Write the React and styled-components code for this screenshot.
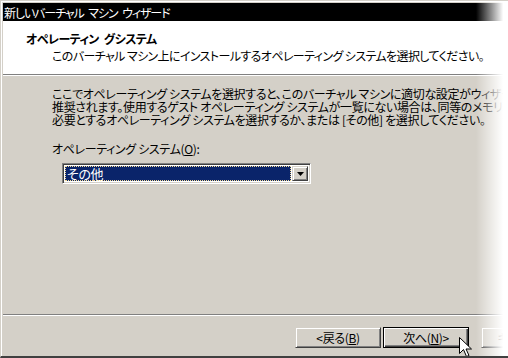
import styled, { createGlobalStyle } from 'styled-components'

const GlobalStyle = createGlobalStyle`
  html, body {
    margin: 0;
    padding: 0;
    background: #ffffff;
  }
  body {
    font-family: "Noto Sans CJK JP", "Noto Sans", sans-serif;
    font-size: 12px;
    line-height: 13px;
    font-feature-settings: "palt";
    letter-spacing: -0.35px;
  }
`

const Window = styled.div`
  position: relative;
  width: 508px;
  height: 358px;
  overflow: hidden;
  box-sizing: border-box;
  background: #d4d0c8;
  border-top: 1px solid #d4d0c8;
  border-left: 1px solid #d4d0c8;
  border-bottom: 2px solid #404040;
  box-shadow: inset 1px 1px 0 #ffffff;
  padding: 2px 0 0 2px;
  display: flex;
  flex-direction: column;
`

const TitleBar = styled.div`
  height: 18px;
  background: #000000;
  color: #ffffff;
  padding-left: 1px;
  display: flex;
  align-items: center;
  white-space: nowrap;
  letter-spacing: -1.1px;
  word-spacing: 3px;
`

const Header = styled.div`
  height: 54px;
  box-sizing: border-box;
  background: #ffffff;
  border-bottom: 1px solid #808080;
  padding: 11px 0 0 23px;
  display: flex;
  flex-direction: column;
  gap: 4px;
  white-space: nowrap;
`

const HeaderTitle = styled.div`
  font-weight: bold;
  letter-spacing: -0.6px;
  word-spacing: 3px;
`

const HeaderSub = styled.div`
  padding-left: 26px;
  letter-spacing: -0.6px;
`

const Body = styled.div`
  flex: 1;
  border-top: 1px solid #ffffff;
  display: flex;
  flex-direction: column;
  padding: 11px 0 0 49px;
`

const Line = styled.div`
  white-space: nowrap;
`

const Label = styled.div`
  margin-top: 16px;
  white-space: nowrap;
`

const Key = styled.span`
  text-decoration: underline;
`

const Combo = styled.div`
  margin: 8px 0 0 10px;
  width: 249px;
  height: 21px;
  box-sizing: border-box;
  background: #ffffff;
  border-top: 1px solid #808080;
  border-left: 1px solid #808080;
  border-right: 1px solid #ffffff;
  border-bottom: 1px solid #ffffff;
  box-shadow: inset 1px 1px 0 #404040, inset -1px -1px 0 #d4d0c8;
  padding: 2px;
  display: flex;
  gap: 1px;
`

const Selected = styled.div`
  flex: 1;
  background: #0a246a;
  color: #ffffff;
  outline: 1px dotted #f5db95;
  outline-offset: -1px;
  padding-left: 2px;
  display: flex;
  align-items: center;
  font-size: 13px;
`

const DropButton = styled.div`
  width: 16px;
  box-sizing: border-box;
  background: #d4d0c8;
  border-top: 1px solid #d4d0c8;
  border-left: 1px solid #d4d0c8;
  border-right: 1px solid #404040;
  border-bottom: 1px solid #404040;
  box-shadow: inset 1px 1px 0 #ffffff, inset -1px -1px 0 #808080;
  display: flex;
  align-items: center;
  justify-content: center;
`

const Footer = styled.div`
  height: 42px;
  border-top: 1px solid #808080;
  box-shadow: inset 0 1px 0 #ffffff;
  display: flex;
  align-items: flex-start;
  padding: 12px 0 0 292px;
  box-sizing: border-box;
`

const Button = styled.div`
  flex: none;
  width: 86px;
  height: 21px;
  box-sizing: border-box;
  display: flex;
  align-items: center;
  justify-content: center;
  background: #d4d0c8;
  color: ${p => (p.$disabled ? '#808080' : '#000000')};
  border: 1px solid ${p => (p.$default ? '#000000' : '#d4d0c8')};
  border-right-color: ${p => (p.$default ? '#000000' : '#404040')};
  border-bottom-color: ${p => (p.$default ? '#000000' : '#404040')};
  box-shadow: ${p =>
    p.$default
      ? 'inset 1px 1px 0 #ffffff, inset -1px -1px 0 #404040, inset -2px -2px 0 #808080'
      : 'inset 1px 1px 0 #ffffff, inset -1px -1px 0 #808080'};
  margin-right: ${p => p.$gap || 0}px;
  white-space: nowrap;
`

const Fade = styled.div`
  position: absolute;
  top: 0;
  right: 0;
  bottom: -2px;
  width: 32px;
  background: linear-gradient(to right, rgba(255, 255, 255, 0) 0%, #ffffff 85%);
  pointer-events: none;
`

const Cursor = styled.svg`
  position: absolute;
  left: 458px;
  top: 336px;
`

export default function App() {
  return (
    <>
      <GlobalStyle />
      <Window>
        <TitleBar>新しいバーチャル マシン ウィザード</TitleBar>
        <Header>
          <HeaderTitle>オペレーティン グシステム</HeaderTitle>
          <HeaderSub>このバーチャル マシン上にインストールするオペレーティング システムを選択してください。</HeaderSub>
        </Header>
        <Body>
          <Line>ここでオペレーティング システムを選択すると、このバーチャル マシンに適切な設定がウィザードによって</Line>
          <Line>推奨されます。使用するゲスト オペレーティング システムが一覧にない場合は、同等のメモリを</Line>
          <Line>必要とするオペレーティング システムを選択するか、または [その他] を選択してください。</Line>
          <Label>オペレーティング システム(<Key>O</Key>):</Label>
          <Combo>
            <Selected>その他</Selected>
            <DropButton>
              <svg width="7" height="4" viewBox="0 0 7 4">
                <path d="M0 0h7L3.5 4z" fill="#000" />
              </svg>
            </DropButton>
          </Combo>
        </Body>
        <Footer>
          <Button $gap={2}>&lt;戻る(<Key>B</Key>)</Button>
          <Button $default $gap={12}>次へ(<Key>N</Key>)&gt;</Button>
          <Button>キャンセル</Button>
        </Footer>
        <Fade />
        <Cursor width="13" height="21" viewBox="0 0 13 21">
          <path d="M0.5 0.5v16l4-4 3 7 2.5-1-3-6.5h5.5z" fill="#fff" stroke="#000" strokeWidth="1" />
        </Cursor>
      </Window>
    </>
  )
}
